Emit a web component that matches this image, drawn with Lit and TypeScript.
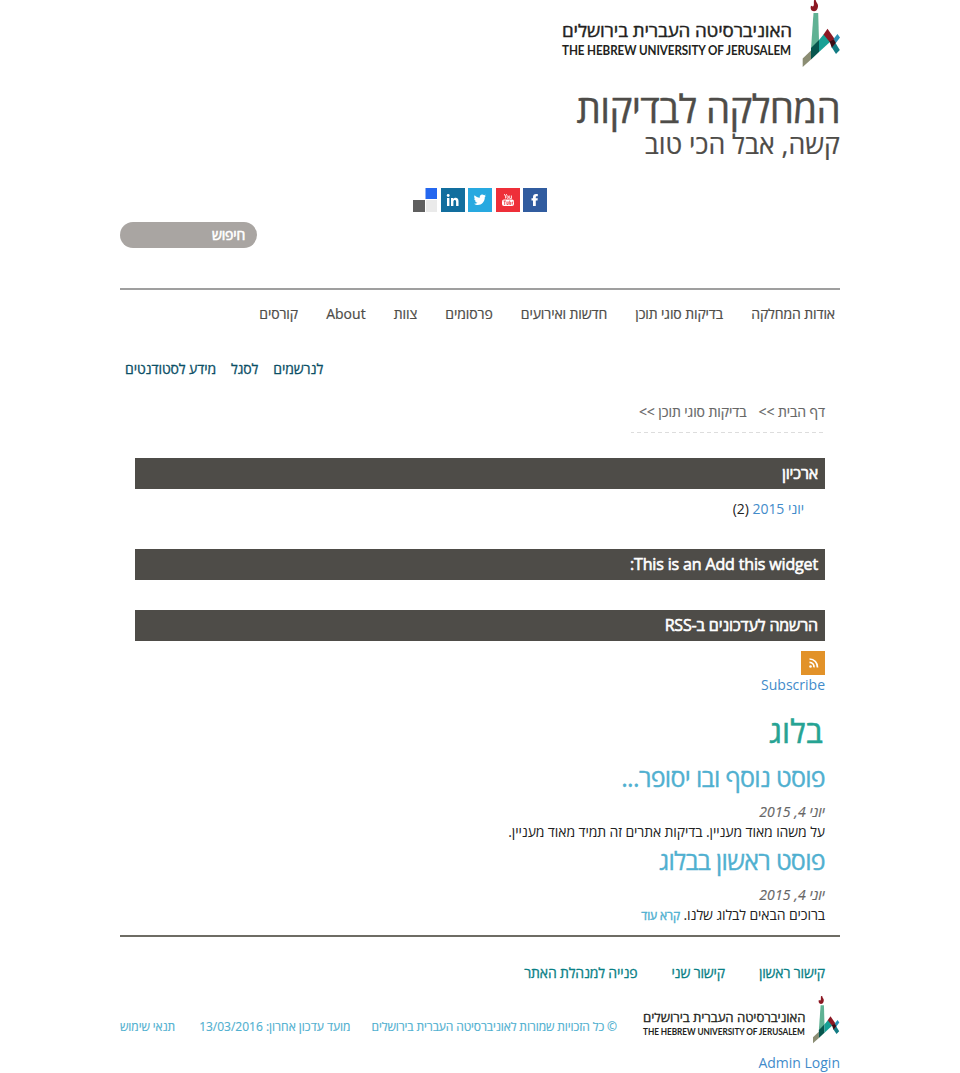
import { LitElement, html, css, svg } from "lit";
import { customElement, property } from "lit/decorators.js";

@customElement("university-logo")
class UniversityLogo extends LitElement {
  static styles = css`
    :host { display: block; direction: ltr; }
    svg { display: block; width: 100%; height: 100%; }
    text { font-family: "Open Sans", "Noto Sans", sans-serif; fill: #231f20; }
    .he { font-size: 17px; stroke: #231f20; stroke-width: .4px; }
    .en { font-family: Lato, "Open Sans", sans-serif; font-size: 13px; font-weight: 700; }
  `;
  render() {
    return html`<svg viewBox="0 0 280 68">
      <text class="he" x="2" y="37" textLength="230" lengthAdjust="spacingAndGlyphs">האוניברסיטה העברית בירושלים</text>
      <text class="en" x="2" y="55" textLength="229" lengthAdjust="spacingAndGlyphs">THE HEBREW UNIVERSITY OF JERUSALEM</text>
      <path fill="#60b294" d="M253.500 13h4.700l.8 28-8 8z" />
      <path fill="#8b8d73" d="M242.700 58.500l8.300-8v9l-8.300 7.500z" />
      <path fill="#07564e" d="M251 48l8-8v12l-8 7.500z" />
      <path fill="#17a095" d="M259 40l5-6 6.500 7.500L259 52z" />
      <path fill="#8c1823" d="M263.500 34.500l4-5.800 7.500 10.800-4.500 3.500z" />
      <path fill="#2d91b5" d="M273.500 39l4-5 2.500 3.500-4.500 6z" />
      <path fill="#127b83" d="M271.500 47l4-4 4.300 7-3.800 4z" />
      <path fill="#380b14" d="M269.500 41.500l4.500-2 1.800 3.500-4 4.700z" />
      <path fill="#8c1823" d="M254 0l2 .2c-.5 2 2.500 3 2 6.500-.5 3-2 4.500-4 4.500-3 0-4-3-3-5.500l2 .8c1.500-1 .5-3 1-6.500z" />
    </svg>`;
  }
}

const socialIcons = [
  svg`<path fill="#315c9f" d="M0 0h24v24H0z"/><path fill="#fff" d="M10 18v-5.500H8.500V10.200H10V9c0-2 1-3 3-3h1.800v2.300h-1c-.7 0-1 .3-1 1v.9h2l-.3 2.300h-1.700V18z"/>`,
  svg`<path fill="#ee2f39" d="M0 0h24v24H0z"/><g fill="none" stroke="#fff" stroke-width=".8"><path d="M8.300 6l1.200 2.500v2M10.700 6L9.500 8.500M15.500 7.500v3h-1.800v-3"/><rect x="11" y="7.800" width="1.500" height="2.700" rx=".7"/></g><rect x="6" y="11.500" width="12" height="6.500" rx="2" fill="#fff"/><path d="M7.500 13h2.500M8.700 13v4M10.900 13.500v3h1.300v-3M13.700 12.500v4h1v-2.500M16.300 16.500v-2.500h1" fill="none" stroke="#ee2f39" stroke-width=".8"/>`,
  svg`<path fill="#28a9e0" d="M0 0h24v24H0z"/><path fill="#fff" d="M6 15.800c1.500.1 2.500-.2 3.500-1-1.200 0-2-.7-2.300-1.700h1c-1.300-.4-2-1.400-2-2.600l1 .2C6 9.800 5.900 8.300 6.600 7.200c1.400 1.600 3 2.400 5.200 2.600-.4-2 .8-3.400 2.400-3.400.8 0 1.400.3 1.900.8l1.600-.6-1 1.500 1.300-.3-1.200 1.300c.1 4.500-3 8-7 8-1.400 0-2.700-.4-3.800-1.300z"/>`,
  svg`<path fill="#126e9e" d="M0 0h24v24H0z"/><path fill="#fff" d="M6 10h2.400v8H6zM10 10h2.300v1.100c1.300-2 5.200-1.900 5.200 2V18h-2.400v-4.300c0-2.300-2.700-2.200-2.700 0V18H10z"/><circle cx="7.200" cy="7.500" r="1.400" fill="#fff"/>`,
  svg`<path fill="#2467ef" d="M12.500 0H24v11H12.500z"/><path fill="#5f5f5f" d="M0 12h12v12H0z"/><path fill="#eaeaea" d="M13 12h11v12H13z"/>`,
];

@customElement("widget-title")
class WidgetTitle extends LitElement {
  @property() label = "";
  static styles = css`
    :host { display: block; }
    h2 { box-sizing: border-box; margin: 0; height: 31px; padding: 0 7px; background: #4e4c48; color: #fff;
      font-size: 16px; line-height: 31px; font-weight: 400; letter-spacing: -.15px; -webkit-text-stroke: .6px #fff; }
  `;
  render() { return html`<h2>${this.label}</h2>`; }
}

@customElement("app-root")
class AppRoot extends LitElement {
  static styles = css`
    :host { display: block; direction: rtl; background: #fff; color: #222; height: 1073px; overflow: hidden;
      font: 14px/20px "Open Sans", "Noto Sans", sans-serif; letter-spacing: -.11px; }
    .page { width: 720px; margin: 0 auto; }
    h1, h2, h3, p { margin: 0; font-weight: 400; }
    a { color: #428bca; text-decoration: none; }
    .latin { letter-spacing: 0; }
    .logo { width: 280px; height: 68px; }
    .site { margin-top: 16px; height: 48px; font-size: 38.500px; line-height: 48px; letter-spacing: -.65px; color: #4e4c48; -webkit-text-stroke: .4px currentColor; }
    .slogan { font-size: 26.700px; line-height: 24px; letter-spacing: 0; color: #4e4c48; height: 56px; -webkit-text-stroke: .2px currentColor; }
    .social { display: flex; justify-content: center; gap: 3.500px; height: 24px; }
    .social svg { width: 24px; height: 24px; }
    .searchrow { display: flex; justify-content: flex-end; padding: 10px 0 40px; border-bottom: 2px solid #9f9f9f; }
    .search { box-sizing: border-box; width: 137px; height: 26px; padding: 0 12px; border-radius: 13px; background: #a9a5a2; color: #fff;
      line-height: 26px; letter-spacing: -.2px; -webkit-text-stroke: .6px #fff; }
    .nav { display: flex; gap: 28.200px; padding: 14px 5px 0; height: 41px; color: #4e4c48; white-space: nowrap; }
    .nav span { -webkit-text-stroke: .2px currentColor; }
    .sub { display: flex; justify-content: flex-end; gap: 15px; padding: 14px 5px 0; height: 29px; color: #0b4f66; letter-spacing: -.1px; -webkit-text-stroke: .3px currentColor; }
    .main { padding: 0 15px; }
    .crumbs { display: flex; gap: 12px; padding-top: 14px; color: #666; letter-spacing: -.08px; -webkit-text-stroke: .15px currentColor; }
    .dash { width: 192px; margin: 10px 2px 25px 0; height: 1px;
      background: repeating-linear-gradient(to left, #ddd 0 4px, transparent 4px 7px); }
    .archive { padding: 10px 21px 30px; letter-spacing: -.05px; }
    .gap { height: 30px; }
    .rss { display: block; width: 24px; height: 24px; margin-top: 10px; }
    .blog { font-size: 32px; line-height: 40px; letter-spacing: .2px; color: #26a393; margin-top: 16px; padding-right: 2px; -webkit-text-stroke: .5px currentColor; }
    .post { font-size: 25px; line-height: 33px; height: 33px; letter-spacing: -.68px; color: #50b0d0; padding-top: 2px; -webkit-text-stroke: .35px currentColor; }
    .first { padding-top: 0; margin-top: 10px; }
    .date { font-style: italic; color: #666; padding-top: 8px; height: 20px; letter-spacing: .1px; -webkit-text-stroke: .15px currentColor; }
    .more { font-size: 12px; color: #50b0d0; -webkit-text-stroke: .4px currentColor; }
    .footer { margin-top: 9px; border-top: 2px solid #6e6c64; }
    .links { display: flex; gap: 34px; padding: 26px 15px 0; color: #0a7f86; letter-spacing: -.17px; -webkit-text-stroke: .3px currentColor; }
    .bottom { display: flex; align-items: center; height: 48px; margin: 13px 0 9px; font-size: 12px; color: #50b0d0; white-space: nowrap; -webkit-text-stroke: .15px currentColor; }
    .small { width: 199px; height: 48px; }
    .legal { flex: 1; display: flex; padding: 14px 24px 0 0; height: 34px; line-height: 34px; }
    .updated { margin-right: 21px; letter-spacing: 0; }
    .terms { margin-right: auto; }
  `;
  render() {
    return html`<div class="page">
      <university-logo class="logo"></university-logo>
      <h1 class="site"><span>המחלקה לבדיקות</span></h1>
      <div class="slogan"><span>קשה, אבל הכי טוב</span></div>
      <div class="social">${socialIcons.map((icon) => html`<svg viewBox="0 0 24 24">${icon}</svg>`)}</div>
      <div class="searchrow"><div class="search">חיפוש</div></div>
      <nav class="nav">${["אודות המחלקה", "בדיקות סוגי תוכן", "חדשות ואירועים", "פרסומים", "צוות", "About", "קורסים"].map((t) => html`<span class=${t === "About" ? "latin" : ""}>${t}</span>`)}</nav>
      <nav class="sub">${["לנרשמים", "לסגל", "מידע לסטודנטים"].map((t) => html`<span>${t}</span>`)}</nav>
      <main class="main">
        <div class="crumbs"><span>דף הבית &gt;&gt;</span><span>בדיקות סוגי תוכן &gt;&gt;</span></div>
        <div class="dash"></div>
        <widget-title label="ארכיון"></widget-title>
        <div class="archive"><a>יוני 2015</a> (2)</div>
        <widget-title label="This is an Add this widget:"></widget-title>
        <div class="gap"></div>
        <widget-title label="הרשמה לעדכונים ב-RSS"></widget-title>
        <svg class="rss" viewBox="0 0 24 24"><path fill="#e29229" d="M0 0h24v24H0z"/><circle cx="9.500" cy="15.500" r="1.300" fill="#fff"/><path d="M8.500 11.300a4.500 4.500 0 0 1 4.500 5M8.500 8a8 8 0 0 1 8 8.500" fill="none" stroke="#fff" stroke-width="1.700"/></svg>
        <a class="latin">Subscribe</a>
        <h2 class="blog">בלוג</h2>
        <h3 class="post first">פוסט נוסף ובו יסופר...</h3>
        <p class="date">יוני 4, 2015</p>
        <p>על משהו מאוד מעניין. בדיקות אתרים זה תמיד מאוד מעניין.</p>
        <h3 class="post">פוסט ראשון בבלוג</h3>
        <p class="date">יוני 4, 2015</p>
        <p>ברוכים הבאים לבלוג שלנו. <a class="more">קרא עוד</a></p>
      </main>
      <footer class="footer">
        <div class="links"><span>קישור ראשון</span><span>קישור שני</span><span>פנייה למנהלת האתר</span></div>
        <div class="bottom"><university-logo class="small"></university-logo>
          <div class="legal"><span>© כל הזכויות שמורות לאוניברסיטה העברית בירושלים</span><span class="updated">מועד עדכון אחרון: 13/03/2016</span><span class="terms">תנאי שימוש</span></div>
        </div>
        <a class="latin">Admin Login</a>
      </footer>
    </div>`;
  }
}
